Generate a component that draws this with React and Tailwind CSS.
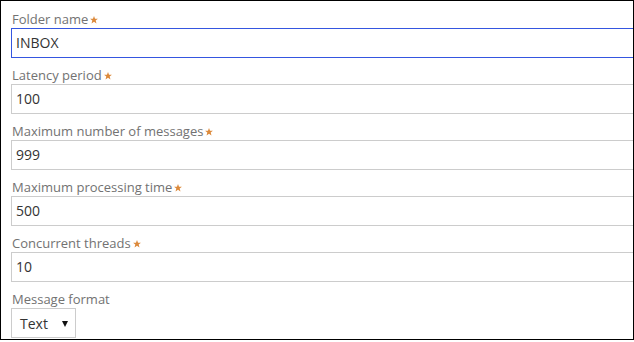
import React from "react";

const font = { fontFamily: '"Open Sans", "Noto Sans", sans-serif' };

function Star() {
  return (
    <svg width="8" height="8" viewBox="0 0 10 10" className="inline-block ml-[2px] align-[0px]">
      <polygon
        points="5,0 6.3,3.3 9.9,3.4 7.1,5.7 8.1,9.4 5,7.3 1.9,9.4 2.9,5.7 0.1,3.4 3.7,3.3"
        fill="#dc8a3c"
      />
    </svg>
  );
}

function Label({ text, required }) {
  return (
    <div className="h-[26px] pt-[8px] pl-[11px] text-[13px] leading-[18px] text-[#727272] whitespace-nowrap">
      {text}
      {required && <Star />}
    </div>
  );
}

function Field({ label, value, focused }) {
  return (
    <div>
      <Label text={label} required />
      <div
        className={
          "ml-[10px] w-[660px] h-[30px] border bg-white pl-[4px] text-[14px] leading-[27px] text-[#333333] " +
          (focused ? "border-[#3556e0]" : "border-[#cccccc]")
        }
      >
        {value}
      </div>
    </div>
  );
}

export default function App() {
  return (
    <div className="w-[634px] h-[342px] bg-white" style={font}>
      <div className="w-[634px] h-[340px] border border-black overflow-hidden bg-white">
        <div className="-mt-[1px] pt-[2px]">
          <Field label="Folder name" value="INBOX" focused />
          <Field label="Latency period" value="100" />
          <Field label="Maximum number of messages" value="999" />
          <Field label="Maximum processing time" value="500" />
          <Field label="Concurrent threads" value="10" />
          <Label text="Message format" />
          <div className="ml-[10px] w-[65px] h-[30px] border border-[#cccccc] flex items-center pl-[8px] pr-[7px] justify-between text-[14px] leading-[27px] text-[#333333]">
            <span>Text</span>
            <svg width="6" height="6" viewBox="0 0 6 6" className="mt-[1px]">
              <polygon points="0,0 6,0 3,6" fill="#111111" />
            </svg>
          </div>
        </div>
      </div>
    </div>
  );
}
